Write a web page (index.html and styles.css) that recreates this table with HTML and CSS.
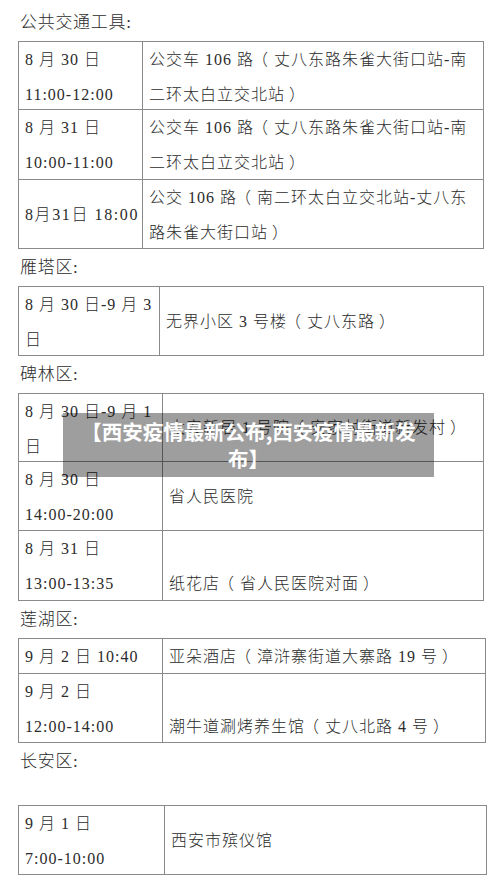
FILE: index.html
```html
<!DOCTYPE html>
<html lang="zh-CN">
<head>
<meta charset="utf-8">
<title>西安疫情最新公布</title>
<link rel="stylesheet" href="styles.css">
</head>
<body>
<div class="page">
  <div class="heading">公共交通工具:</div>
  <div class="tbl t1">
    <div class="cell">8 月 30 日<br>11:00-12:00</div>
    <div class="cell">公交车 106 路<span class="pl">（</span>丈八东路朱雀大街口站-南<br>二环太白立交北站<span class="pr">）</span></div>
    <div class="cell">8 月 31 日<br>10:00-11:00</div>
    <div class="cell">公交车 106 路<span class="pl">（</span>丈八东路朱雀大街口站-南<br>二环太白立交北站<span class="pr">）</span></div>
    <div class="cell mid wide">8月31日 18:00</div>
    <div class="cell">公交 106 路<span class="pl">（</span>南二环太白立交北站-丈八东<br>路朱雀大街口站<span class="pr">）</span></div>
  </div>

  <div class="heading">雁塔区:</div>
  <div class="tbl t2">
    <div class="cell">8 月 30 日-9 月 3<br>日</div>
    <div class="cell mid">无界小区 3 号楼<span class="pl">（</span>丈八东路<span class="pr">）</span></div>
  </div>

  <div class="heading">碑林区:</div>
  <div class="tbl t3">
    <div class="cell">8 月 30 日-9 月 1<br>日</div>
    <div class="cell mid">太安新居 1 号院<span class="pl">（</span>安家村街道新发村<span class="pr">）</span></div>
    <div class="cell">8 月 30 日<br>14:00-20:00</div>
    <div class="cell mid">省人民医院</div>
    <div class="cell">8 月 31 日<br>13:00-13:35</div>
    <div class="cell bot">纸花店<span class="pl">（</span>省人民医院对面<span class="pr">）</span></div>
  </div>

  <div class="heading">莲湖区:</div>
  <div class="tbl t4">
    <div class="cell mid">9 月 2 日 10:40</div>
    <div class="cell mid">亚朵酒店<span class="pl">（</span>漳浒寨街道大寨路 19 号<span class="pr">）</span></div>
    <div class="cell">9 月 2 日<br>12:00-14:00</div>
    <div class="cell bot">潮牛道涮烤养生馆<span class="pl">（</span>丈八北路 4 号<span class="pr">）</span></div>
  </div>

  <div class="heading last">长安区:</div>
  <div class="tbl t5">
    <div class="cell">9 月 1 日<br>7:00-10:00</div>
    <div class="cell mid">西安市殡仪馆</div>
  </div>

  <div class="caption">【西安疫情最新公布,西安疫情最新发布】</div>
</div>
</body>
</html>
```
FILE: styles.css
```css
html, body {
  margin: 0;
  padding: 0;
  background: #ffffff;
}

.page {
  position: relative;
  padding-top: 4px;
  width: 500px;
  height: 890px;
  overflow: hidden;
  font-family: "Liberation Serif", "Noto Sans CJK SC", serif;
  font-weight: 300;
  color: #2b2b2b;
}

.heading {
  height: 37px;
  line-height: 37px;
  padding-left: 20px;
  font-size: 17px;
  letter-spacing: 0.7px;
  white-space: nowrap;
}

.heading.last {
  margin-bottom: 25px;
}

.tbl {
  display: grid;
  margin-left: 18px;
  border-top: 1px solid #8a8a8a;
  border-left: 1px solid #8a8a8a;
  box-sizing: border-box;
}

.t1 {
  width: 466px;
  grid-template-columns: 124px 1fr;
  grid-template-rows: 68px 70px 69px;
}

.t2 {
  width: 466px;
  grid-template-columns: 141px 1fr;
  grid-template-rows: 69px;
}

.t3 {
  width: 466px;
  grid-template-columns: 144px 1fr;
  grid-template-rows: 68px 69px 70px;
}

.t4 {
  width: 468px;
  grid-template-columns: 144px 1fr;
  grid-template-rows: 35px 69px;
}

.t5 {
  width: 469px;
  grid-template-columns: 146px 1fr;
  grid-template-rows: 69px;
}

.cell {
  box-sizing: border-box;
  border-right: 1px solid #8a8a8a;
  border-bottom: 1px solid #8a8a8a;
  padding: 0 5px 0 6px;
  font-size: 16px;
  line-height: 35px;
  letter-spacing: 1px;
  white-space: nowrap;
  overflow: visible;
  min-width: 0;
}

.cell.wide {
  letter-spacing: 1.6px;
}

.cell.mid {
  display: flex;
  align-items: center;
}

.cell.bot {
  padding-top: 35px;
}

.pl {
  margin-left: -2px;
  margin-right: 5px;
}

.pr {
  margin-left: 4px;
}

.caption {
  position: absolute;
  left: 63px;
  top: 413px;
  width: 371px;
  box-sizing: border-box;
  padding: 5px 16px;
  background: rgba(0, 0, 0, 0.38);
  color: #ffffff;
  font-family: "Noto Sans CJK SC", "Noto Sans", sans-serif;
  font-weight: 700;
  font-size: 20.5px;
  line-height: 27px;
  text-align: center;
  letter-spacing: 0;
}
```
